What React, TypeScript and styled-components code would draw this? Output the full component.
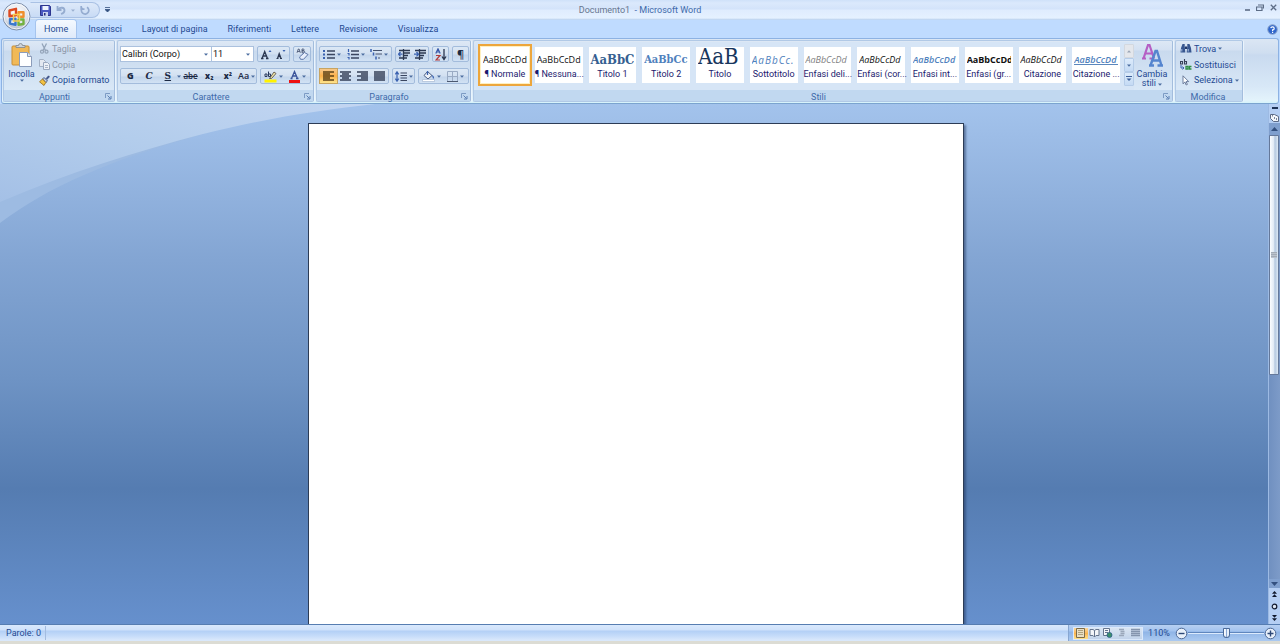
import React from 'react';
import styled, { createGlobalStyle, css } from 'styled-components';

const GlobalStyle = createGlobalStyle`
  *, *::before, *::after { box-sizing: border-box; }
  html, body, #root { height: 100%; }
  body {
    margin: 0;
    overflow: hidden;
    font-family: Roboto, 'Noto Sans', sans-serif;
    font-size: 9px;
    line-height: 12px;
    color: #1f4a92;
  }
  button, select, input { font: inherit; color: inherit; }
  button { border: 0; padding: 0; background: none; cursor: default; }
`;

const Window = styled.div`
  display: flex;
  flex-direction: column;
  height: 100vh;
  background: #bfdbff;
`;

/* ---------- title bar ---------- */

const TitleBar = styled.header`
  display: grid;
  grid-template-columns: 1fr auto 1fr;
  align-items: center;
  height: 20px;
  background: linear-gradient(#cfe1f9 0, #dbe9fc 3px, #d3e3fa 9px, #dfecfe 10px, #e5f1ff 18px, #b6cfee 20px);
`;

const QuickAccess = styled.div`
  display: flex;
  align-items: center;
  gap: 5px;
  margin-left: 30px;
`;

const QuickPill = styled.div`
  display: flex;
  align-items: center;
  gap: 4px;
  height: 16px;
  width: 70px;
  padding-left: 8px;
  border: 1px solid #a9c1e4;
  border-left-color: transparent;
  border-radius: 0 8px 8px 0;
  background: linear-gradient(#dde9f9, #c8dbf5);
`;

const DocTitle = styled.h1`
  margin: 0;
  font-size: 9px;
  font-weight: 400;
  line-height: 12px;
  white-space: pre;
  color: #3e6aaa;
`;

const DocName = styled.span`
  color: #67768f;
`;

const WindowButtons = styled.div`
  display: flex;
  justify-content: flex-end;
  align-items: center;
  gap: 3px;
  height: 14px;
  padding-right: 2px;
  align-self: start;
`;

const OfficeButton = styled.button`
  position: absolute;
  left: 2px;
  top: 2px;
  width: 30px;
  height: 30px;
  z-index: 2;
`;

const IconButton = styled.button<{ $w?: number }>`
  display: flex;
  align-items: center;
  justify-content: center;
  flex: none;
  width: ${(p) => (p.$w ? `${p.$w}px` : 'auto')};
  height: 14px;
`;

/* ---------- tabs ---------- */

const TabRow = styled.nav`
  display: flex;
  align-items: flex-end;
  gap: 4px;
  height: 18px;
  padding: 0 2px 0 36px;
  background: #bfdbff;
`;

const Tab = styled.button<{ $active?: boolean }>`
  height: 18px;
  padding: 0 8px;
  line-height: 16px;
  white-space: nowrap;
  border-radius: 3px 3px 0 0;
  ${(p) =>
    p.$active &&
    css`
      background: linear-gradient(#f4f9ff, #dfeafa);
      box-shadow: 0 0 0 1px #a5c4ee;
      clip-path: inset(-1px -1px 0 -1px);
    `}
`;

const HelpButton = styled(IconButton)`
  margin-left: auto;
  height: 18px;
`;

/* ---------- ribbon ---------- */

const Ribbon = styled.section`
  display: flex;
  gap: 2px;
  height: 66px;
  margin: 0 1px;
  padding: 1px;
  border: 1px solid #8db2e3;
  border-bottom-color: #7ba4cf;
  border-radius: 3px;
  background: linear-gradient(#dbe6f4 0, #cfdef0 14px, #c9daef 16px, #d8e8f7 48px, #e3f3fb 61px, #d5f3fb 64px);
`;

const Group = styled.section<{ $w?: number }>`
  display: flex;
  flex-direction: column;
  flex: none;
  width: ${(p) => (p.$w ? `${p.$w}px` : 'auto')};
  border: 1px solid #b1c9e6;
  border-right-color: #a3bddd;
  border-radius: 2px;
  box-shadow: 1px 0 0 #eaf4fd;
  background: linear-gradient(#dde8f5 0, #d4e1f2 9px, #c9daee 10px, #d9e8f7 50px);
`;

const GroupBody = styled.div`
  display: flex;
  flex: 1;
  min-height: 0;
  padding: 0 2px;
`;

const GroupTitle = styled.footer`
  display: flex;
  align-items: center;
  height: 11px;
  padding: 2px 2px 0 0;
  background: #c1d8f0;
  color: #3e6aaa;
`;

const GroupName = styled.h2`
  flex: 1;
  margin: 0;
  font-size: 9px;
  font-weight: 400;
  line-height: 12px;
  text-align: center;
`;

const Stack = styled.div`
  display: flex;
  flex-direction: column;
  justify-content: center;
  padding: 0 0 2px 2px;
`;

const SmallButton = styled.button<{ $dim?: boolean }>`
  display: flex;
  align-items: center;
  gap: 2px;
  height: 16px;
  white-space: nowrap;
  color: ${(p) => (p.$dim ? '#8e98a8' : '#1f4a92')};
`;

const BigButton = styled.button<{ $w: number }>`
  display: flex;
  flex-direction: column;
  align-items: center;
  width: ${(p) => p.$w}px;
  line-height: 9px;
  padding-top: 2px;
`;

const BigLabel = styled.span`
  margin-top: 3px;
`;

const Rows = styled.div`
  display: flex;
  flex-direction: column;
  gap: 6px;
  padding-top: 5px;
`;

const Row = styled.div`
  display: flex;
  align-items: center;
  gap: 3px;
  height: 16px;
`;

const ButtonSet = styled.div<{ $w: number }>`
  display: flex;
  align-items: center;
  justify-content: space-around;
  flex: none;
  width: ${(p) => p.$w}px;
  height: 16px;
  border: 1px solid #a3bcdc;
  border-radius: 2px;
  background: linear-gradient(#dce8f5 0, #d2e0f1 7px, #c3d5eb 8px, #d2e2f4 14px);
`;

const Tool = styled.button<{ $active?: boolean }>`
  display: flex;
  align-items: center;
  justify-content: center;
  flex: 1;
  gap: 2px;
  height: 14px;
  color: #1c2a44;
  ${(p) =>
    p.$active &&
    css`
      background: linear-gradient(#f7c88a, #fdb14a 50%, #fde58d);
      box-shadow: 0 0 0 1px #c7a462;
    `}
`;

const Glyph = styled.span<{ $serif?: boolean; $bold?: boolean; $italic?: boolean; $size?: number; $line?: string }>`
  font-family: ${(p) => (p.$serif ? "'DejaVu Serif', serif" : "'Open Sans', sans-serif")};
  font-weight: ${(p) => (p.$bold ? 800 : 600)};
  font-style: ${(p) => (p.$italic ? 'italic' : 'normal')};
  font-size: ${(p) => p.$size ?? 9}px;
  line-height: 12px;
  text-decoration: ${(p) => p.$line ?? 'none'};
`;

const Combos = styled.div`
  display: flex;
`;

const Combo = styled.label<{ $w: number }>`
  display: flex;
  align-items: center;
  width: ${(p) => p.$w}px;
  height: 16px;
  padding-right: 3px;
  border: 1px solid #abc1de;
  background: #fff;
  & + & { margin-left: -1px; }
`;

const ComboSelect = styled.select`
  flex: 1;
  min-width: 0;
  padding: 0 0 0 1px;
  border: 0;
  outline: 0;
  appearance: none;
  background: transparent;
  color: #111;
`;

/* ---------- style gallery ---------- */

const GalleryFrame = styled.div`
  display: flex;
  margin-top: 1px;
  height: 48px;
  padding: 2px 0 0 5px;
  background: #d6e5f6;
`;

const Gallery = styled.div`
  display: grid;
  grid-template-columns: repeat(12, 1fr);
  gap: 6px;
  width: 639px;
  padding-top: 3px;
`;

const StyleCard = styled.button<{ $active?: boolean }>`
  display: flex;
  flex-direction: column;
  min-width: 0;
  height: 36px;
  background: #fff;
  ${(p) =>
    p.$active &&
    css`
      box-shadow: 0 0 0 1px #fff0c0, 0 0 0 3px #eda63c;
    `}
`;

type SampleStyle = {
  size?: number;
  serif?: boolean;
  bold?: boolean;
  italic?: boolean;
  color?: string;
  spaced?: boolean;
  underline?: boolean;
};

const Sample = styled.span<{ $s: SampleStyle }>`
  align-self: center;
  width: 44px;
  height: 21px;
  line-height: ${(p) => ((p.$s.size ?? 9) > 15 ? 20 : 26)}px;
  overflow: hidden;
  text-align: left;
  white-space: nowrap;
  font-family: ${(p) => (p.$s.serif ? "'DejaVu Serif Condensed', 'DejaVu Serif', serif" : "'Open Sans', sans-serif")};
  font-size: ${(p) => p.$s.size ?? 9}px;
  font-weight: ${(p) => (p.$s.bold ? (p.$s.italic ? 600 : 700) : 400)};
  font-style: ${(p) => (p.$s.italic ? 'italic' : 'normal')};
  color: ${(p) => p.$s.color ?? '#111'};
  letter-spacing: ${(p) => (p.$s.spaced ? '1px' : 'normal')};
  border-bottom: ${(p) => (p.$s.underline ? '1px solid #5b87bd' : '0')};
`;

const StyleName = styled.span`
  width: 100%;
  text-align: center;
  white-space: nowrap;
  line-height: 18px;
  color: #1a1a6e;
`;

const GalleryScroll = styled.div`
  display: flex;
  flex-direction: column;
  width: 10px;
  margin-left: 4px;
`;

const ScrollStep = styled.button<{ $dim?: boolean }>`
  display: flex;
  align-items: center;
  justify-content: center;
  height: 14px;
  border: 1px solid ${(p) => (p.$dim ? '#d3d8df' : '#b5cce8')};
  border-radius: 1px;
  background: ${(p) => (p.$dim ? '#e4e7ec' : 'linear-gradient(#dcebfb, #c4daf4)')};
`;

/* ---------- workspace ---------- */

const Workspace = styled.main`
  position: relative;
  display: flex;
  flex: 1;
  min-height: 0;
  overflow: hidden;
  background: linear-gradient(#a3c3ec 0, #9dbde7 6%, #83a5d3 30%, #6e93c4 53%, #557cb1 74%, #6690cd 100%);
`;

const Swoosh = styled.svg`
  position: absolute;
  left: 0;
  top: 0;
`;

const Canvas = styled.div`
  position: relative;
  display: flex;
  flex: 1;
  justify-content: center;
  padding: 19px 0 0 3px;
`;

const Page = styled.article`
  width: 656px;
  max-width: 90%;
  border: 1px solid #2c3c56;
  border-bottom: 0;
  background: #fff;
  box-shadow: 2px 2px 2px rgba(30, 50, 90, 0.5);
`;

const ScrollColumn = styled.aside`
  position: relative;
  display: flex;
  flex-direction: column;
  align-items: center;
  width: 12px;
  border-left: 1px solid #9dbae3;
  background: #b4cef3;
`;

const SplitHandle = styled.div`
  width: 6px;
  height: 2px;
  margin: 3px 0 2px;
  background: #1e3356;
`;

const ScrollButton = styled.button<{ $h: number; $track?: boolean }>`
  display: flex;
  align-items: center;
  justify-content: center;
  width: 100%;
  height: ${(p) => p.$h}px;
  background: ${(p) => (p.$track ? '#7f9fce' : 'none')};
`;

const Track = styled.div`
  flex: 1;
  width: 100%;
  background: linear-gradient(90deg, #7090c0, #7d9bc8);
`;

const Thumb = styled.div`
  display: flex;
  align-items: center;
  justify-content: center;
  width: 10px;
  height: 54%;
  border: 1px solid #64789a;
  border-radius: 1px;
  background: linear-gradient(90deg, #fbfdff, #dfe9f4 50%, #b3c7df 60%, #dce8f4);
`;

const Grip = styled.div`
  width: 6px;
  height: 6px;
  background: repeating-linear-gradient(#a3abb6 0, #a3abb6 1px, #bcc3cd 1px, #bcc3cd 2px);
`;

/* ---------- status bar ---------- */

const StatusBar = styled.footer`
  display: flex;
  align-items: center;
  height: 20px;
  border-top: 1px solid #567db1;
  border-bottom: 3px solid #dcdcd4;
  background: linear-gradient(#d9e9fd 0, #cfe1fa 5px, #b3d0f6 6px, #c6dcf9 11px, #d9e8fb 15px);
`;

const WordCount = styled.button`
  height: 14px;
  width: 46px;
  padding-left: 6px;
  text-align: left;
  border-right: 1px solid #a3bcdf;
`;

const ViewPanel = styled.div`
  display: flex;
  align-items: center;
  flex: 1;
  justify-content: flex-end;
`;

const ViewTools = styled.div`
  display: flex;
  align-items: center;
  padding: 0 3px 0 4px;
  height: 16px;
  border-left: 1px solid #87a6d1;
  background: linear-gradient(#b7d0f2 0, #a3c3ee 6px, #8fb4e6 7px, #a9c8f0 15px);
`;

const ViewSet = styled.div`
  display: flex;
  width: 70px;
  height: 13px;
  border: 1px solid #dbe9fb;
`;

const ViewButton = styled.button<{ $active?: boolean }>`
  display: flex;
  align-items: center;
  justify-content: center;
  flex: 1;
  background: ${(p) => (p.$active ? 'linear-gradient(#fbd79b, #fbb54f 50%, #fde18c)' : 'linear-gradient(#dae5f2, #c2d3ea)')};
`;

const ZoomButton = styled.button`
  width: 32px;
  text-align: center;
`;

const RoundButton = styled.button`
  display: flex;
  width: 13px;
  height: 13px;
`;

const ZoomSlider = styled.input`
  width: 76px;
  height: 12px;
  margin: 0;
  appearance: none;
  background: linear-gradient(transparent 5px, #5f86bd 5px, #5f86bd 6px, #dcebfd 6px, #dcebfd 7px, transparent 7px);
  &::-webkit-slider-thumb {
    appearance: none;
    width: 7px;
    height: 10px;
    border: 1px solid #4b6a99;
    border-radius: 1px 1px 4px 4px;
    background: linear-gradient(90deg, #fff 0, #e6effa 2px, #8aa8d4 2px, #8aa8d4 3px, #e6effa 3px);
  }
`;

/* ---------- drawings ---------- */

const Svg = ({ w, h, children }: { w: number; h: number; children: React.ReactNode }) => (
  <svg width={w} height={h} viewBox={`0 0 ${w} ${h}`} fill="none" aria-hidden="true">
    {children}
  </svg>
);

const Caret = ({ color = '#4b6c9f' }: { color?: string }) => (
  <Svg w={4} h={3}>
    <path d="M0 .5h4L2 2.8z" fill={color} />
  </Svg>
);

const OfficeOrb = () => (
  <svg width="30" height="30" viewBox="0 0 30 30" aria-hidden="true">
    <defs>
      <radialGradient id="orb" cx="50%" cy="35%" r="65%">
        <stop offset="0" stopColor="#fff" />
        <stop offset=".65" stopColor="#dfe4ec" />
        <stop offset="1" stopColor="#a8b4c6" />
      </radialGradient>
    </defs>
    <circle cx="14.500" cy="14.500" r="13.500" fill="url(#orb)" stroke="#7f90ab" />
    <circle cx="14.500" cy="14.500" r="12.400" fill="none" stroke="#fff" strokeWidth=".8" />
    <g fill="none" strokeWidth="2.400" strokeLinejoin="round">
      <path d="M7.500 8.500 14 6.800v6.400l-6.500 1z" stroke="#dc4a20" />
      <path d="M16.500 10.200h5v4.600h-5z" stroke="#ef8f2c" />
      <path d="M8 17.200l5.500-.4v6L8 21.500z" stroke="#3a78cc" />
      <path d="M16.500 17.500h5v4.500l-5 .8z" stroke="#74b240" />
    </g>
    <path d="M11.500 12.500h6v6.500h-6z" fill="none" stroke="#f8cf50" strokeWidth="1.400" />
  </svg>
);

const SaveIcon = () => (
  <Svg w={11} h={11}>
    <path d="M.5.5h9l1 1v9H.5z" fill="#4a58c0" stroke="#2c358e" />
    <path d="M2.500 1h6v4h-6z" fill="#eef4ff" />
    <path d="M3 7h5v4H3z" fill="#c9d3ee" />
    <path d="M4 8h1.500v2.500H4z" fill="#222c78" />
  </Svg>
);

const UndoIcon = () => (
  <Svg w={10} h={10}>
    <path d="M1.500 1v4h4M2 4.500C4 2 8.500 2 8.500 5.500 8.500 7.500 7 8.500 5 9" stroke="#95acd0" strokeWidth="1.800" />
  </Svg>
);

const RedoIcon = () => (
  <Svg w={10} h={10}>
    <path d="M7 2.200a3.700 3.700 0 1 1-4.500.5M1.200 1v3.200h3.300" stroke="#95acd0" strokeWidth="1.700" />
  </Svg>
);

const PasteIcon = () => (
  <Svg w={21} h={24}>
    <rect x="1" y="3" width="17" height="19" rx="1" fill="#f1b957" stroke="#c98f37" />
    <path d="M5 4.500h9v-2h-2.500a2 2 0 0 0-4 0H5z" fill="#cdd3da" stroke="#7f8790" strokeWidth=".8" />
    <path d="M8.500 9.500h8l4 4v10h-12z" fill="#fff" stroke="#8b9cba" />
    <path d="M16.500 9.500v4h4" fill="#dfe8f4" stroke="#8b9cba" />
  </Svg>
);

const CutIcon = () => (
  <Svg w={11} h={11}>
    <path d="M3 .5l3.500 7M7.500.5 4 7.500" stroke="#93a3b8" strokeWidth="1.300" />
    <circle cx="3" cy="8.700" r="1.500" stroke="#93a3b8" strokeWidth="1.200" />
    <circle cx="7.500" cy="8.700" r="1.500" stroke="#93a3b8" strokeWidth="1.200" />
  </Svg>
);

const CopyIcon = () => (
  <Svg w={11} h={11}>
    <path d="M.5.5h4l2 2v5h-6z" fill="#e3e9f1" stroke="#a3b1c5" />
    <path d="M4.500 3.500h4l2 2v5h-6z" fill="#edf1f6" stroke="#9aa9bf" />
    <path d="M6 6.500h3M6 8.500h3" stroke="#a9b6c9" />
  </Svg>
);

const BrushIcon = () => (
  <Svg w={11} h={11}>
    <path d="M7 3.500 9.500.8l1 1L8 4.500z" fill="#3b4f86" stroke="#3b4f86" strokeWidth=".6" />
    <path d="M5 2.500 8.500 6 6.800 7.500 3.500 4z" fill="#c9d3e8" stroke="#3b4f7c" strokeWidth=".9" />
    <path d="M3.500 4 6.800 7.500 5 10.500.5 6.800z" fill="#f2c243" stroke="#8f671c" strokeWidth=".8" />
  </Svg>
);

const Launcher = () => (
  <Svg w={7} h={7}>
    <path d="M.5 5V.5H5" stroke="#7c9bc4" />
    <path d="M2.500 2.500l3 3M6 3v3H3" stroke="#5b7fb2" />
  </Svg>
);

const EraserIcon = () => (
  <Svg w={13} h={12}>
    <path d="M1 4.800 2.300 1h.8l1.200 3.800M1.500 3.500h2.300M6 1v3.800h1.500a1 1 0 0 0 0-2H6h1.200a.9.900 0 0 0 0-1.800z" stroke="#3c4a68" strokeWidth=".8" />
    <path d="M3.500 9 8.500 4.500l3.500 2-4.500 4.800H4.500z" fill="#e7eefb" stroke="#5f77a8" />
  </Svg>
);

const HighlightIcon = () => (
  <Svg w={13} h={13}>
    <path d="M5.500 8.500 10 2l2 1.500-4.500 5z" fill="#f0e4a8" stroke="#5a5448" strokeWidth=".9" />
    <path d="M.5 9.500h12v3H.5z" fill="#fff200" />
    <path d="M1 6.500V4h2v2.500zM4.500 1.500v5h2V4h-2" stroke="#2a3a5c" />
  </Svg>
);

const FontColorIcon = () => (
  <Svg w={11} h={13}>
    <path d="M1.500 8.500h2M7 8.500h2.500M2.500 8.500 5.500 1.500l3 7M3.500 6h4" stroke="#3a539a" strokeWidth="1.300" />
    <path d="M0 10h11v3H0z" fill="#ee1111" />
  </Svg>
);

const BulletIcon = ({ kind }: { kind: 'dots' | 'numbers' | 'levels' }) => (
  <Svg w={12} h={11}>
    {kind === 'dots' && <path d="M0 1h2v2H0zM0 4.500h2v2H0zM0 8h2v2H0z" fill="#3b62b0" />}
    {kind === 'numbers' && <path d="M1.500 0v3M.5 4.500h1.500v2M.5 8.500h1.500v2" stroke="#3b62b0" strokeWidth="1.200" />}
    {kind === 'levels' ? (
      <>
        <path d="M1 0v3M3.500 3.500v3M6 7.500v3" stroke="#3b62b0" strokeWidth="1.500" />
        <path d="M3 1.500h9M5.500 5H12M8 9h2" stroke="#46536e" strokeWidth="1.200" />
      </>
    ) : (
      <path d="M4 2h8M4 5.500h8M4 9h8" stroke="#3a4660" strokeWidth="1.300" />
    )}
  </Svg>
);

const IndentIcon = ({ out }: { out?: boolean }) => (
  <Svg w={12} h={11}>
    <path d="M1 1.500h11M6 4h6M6 6.500h4M1 9h8M5.500 0v11" stroke="#2b3750" strokeWidth="1.300" />
    <path d={out ? 'M4.500 5.200H1M2.500 3 .5 5.200l2 2.200' : 'M0 5.200h4M2.500 3l2 2.200-2 2.200'} stroke="#3b62b0" strokeWidth="1.300" />
  </Svg>
);

const SortIcon = () => (
  <Svg w={12} h={13}>
    <path d="M.8 5.500 3 .8l2.200 4.700M1.500 4h3" stroke="#3657a8" strokeWidth="1.200" />
    <path d="M1 7.500h4l-4 4.500h4" stroke="#b23a3a" strokeWidth="1.200" />
    <path d="M9 1v10M7 8.500l2 3 2-3" stroke="#2b3750" strokeWidth="1.300" />
  </Svg>
);

const AlignIcon = ({ side }: { side: 'left' | 'center' | 'right' | 'full' }) => {
  const d = {
    left: 'M0 1h11M0 3h7M0 5h11M0 7h7M0 9h11',
    center: 'M0 1h11M2 3h7M0 5h11M2 7h7M0 9h11',
    right: 'M0 1h11M4 3h7M0 5h11M4 7h7M0 9h11',
    full: 'M0 1h11M0 3h11M0 5h11M0 7h11M0 9h11',
  }[side];
  return (
    <Svg w={11} h={10}>
      <path d={d} stroke={side === 'left' ? '#5c4218' : '#333e55'} strokeWidth="1.300" />
    </Svg>
  );
};

const SpacingIcon = () => (
  <Svg w={12} h={11}>
    <path d="M2 1v9M.3 3.300 2 .8l1.700 2.500M.3 7.700 2 10.200l1.700-2.500" stroke="#3b62b0" strokeWidth="1.200" />
    <path d="M5.500 2H12M5.500 4.500H12M5.500 7H12M5.500 9.500H12" stroke="#3a4660" strokeWidth="1.100" />
  </Svg>
);

const BucketIcon = () => (
  <Svg w={13} h={12}>
    <path d="M5.500 1.500 10 5.500 6 9 2 5.500z" fill="#eef2f8" stroke="#4a5e84" />
    <path d="M5.500 1v4M10 5.500c1.500.5 1.500 2 1.500 3" stroke="#3b62b0" strokeWidth="1.300" />
    <path d="M.5 9.500h12v2H.5z" fill="#fff" stroke="#9db0cd" strokeWidth=".6" />
  </Svg>
);

const BordersIcon = () => (
  <Svg w={11} h={11}>
    <path d="M.5 10V.5h10V10M5.500.5V10M.5 5.500h10" stroke="#9aabc4" />
    <path d="M0 10.500h11" stroke="#4b5870" />
  </Svg>
);

const ChangeStylesIcon = () => (
  <Svg w={23} h={24}>
    <path d="M1 15.500h4M8.500 15.500h4M2.500 15.500 7 2h1.500l4.500 13.500M4.500 10.500h6.500" stroke="#b55fc4" strokeWidth="2.200" />
    <path d="M8 22.500h5M16.500 22.500H22M9.500 22.500 14.500 8H16l4.500 14.500M11.500 17.500h7.500" stroke="#5585cf" strokeWidth="2.400" />
  </Svg>
);

const BinocularsIcon = () => (
  <Svg w={12} h={11}>
    <path d="M2.500 1h2.200v2L5.300 9.500H.5L1 5zM7.300 1h2.200L11 5l.5 4.500H6.700L7.300 3z" fill="#37568f" />
    <path d="M5 3.500h2v2.500H5z" fill="#22396a" />
    <path d="M1.800 6v2.500M8.200 6v2.500" stroke="#a9bfe4" />
  </Svg>
);

const ReplaceIcon = () => (
  <Svg w={12} h={11}>
    <path d="M.5 2.500h2v2.500h-2zM4.500 0v5h2V2.500h-2" stroke="#37415a" strokeWidth="1.100" />
    <path d="M1 6v3h2M2.500 7.500 4 9 2.500 10.500" stroke="#3b62b0" />
    <path d="M6 7.500h2V10H6zM11.500 7.500H9.500V10h2" stroke="#2f8f46" strokeWidth="1.300" />
  </Svg>
);

const PointerIcon = () => (
  <Svg w={12} h={11}>
    <path d="M3 .8v8l1.900-1.800 1.300 3 1.200-.6-1.300-2.800h2.600z" fill="#fff" stroke="#5d6f92" strokeWidth=".9" />
  </Svg>
);

const HelpIcon = () => (
  <Svg w={11} h={11}>
    <circle cx="5.500" cy="5.500" r="4.800" fill="#2f66cc" stroke="#8fa6cc" />
    <path d="M3.800 4.200a1.700 1.500 0 1 1 1.800 1.700v1M5.600 7.800v1.200" stroke="#fff" strokeWidth="1.200" />
  </Svg>
);

const ViewIcon = ({ kind }: { kind: number }) => (
  <Svg w={11} h={10}>
    {kind === 0 && (
      <>
        <path d="M1.500.5h8v9h-8z" fill="#e9dfc4" stroke="#7c6c4a" />
        <path d="M3 2.500h5M3 4.500h5M3 6.500h5" stroke="#b0a37f" />
      </>
    )}
    {kind === 1 && <path d="M1 1.500h3l1.500 1L7 1.500h3v6H7L5.500 9 4 7.500H1zM5.500 2.500V9" fill="#f4f6f9" stroke="#65748d" />}
    {kind === 2 && (
      <>
        <path d="M1.500.5h6v7h-6zM3 2.500h3M3 4.500h3" fill="#f4f6f9" stroke="#65748d" />
        <circle cx="7.500" cy="7" r="2.500" fill="#3d8f6a" stroke="#2b5f8c" strokeWidth=".8" />
      </>
    )}
    {kind === 3 && <path d="M3 1.500h5M4.500 3.500h4M4.500 5.500h4M3 7.500h5" stroke="#9aa7ba" strokeWidth="1.500" />}
    {kind === 4 && <path d="M1 1.500h9M1 3.500h9M1 5.500h9M1 7.500h9" stroke="#8494ad" strokeWidth="1.600" />}
  </Svg>
);

const RoundIcon = ({ plus }: { plus?: boolean }) => (
  <Svg w={13} h={13}>
    <circle cx="6.500" cy="6.500" r="5.300" fill="#e8f0fa" stroke="#4c6794" />
    <path d={plus ? 'M3.500 6.500h6M6.500 3.500v6' : 'M3.500 6.500h6'} stroke="#2d4877" strokeWidth="1.400" />
  </Svg>
);

/* ---------- data ---------- */

const tabs = ['Home', 'Inserisci', 'Layout di pagina', 'Riferimenti', 'Lettere', 'Revisione', 'Visualizza'];

const BLUE = '#4f81bd';

const galleryStyles: { name: string; text: string; style: SampleStyle }[] = [
  { name: '¶ Normale', text: 'AaBbCcDd', style: {} },
  { name: '¶ Nessuna...', text: 'AaBbCcDd', style: {} },
  { name: 'Titolo 1', text: 'AaBbCc', style: { size: 13, serif: true, bold: true, color: '#365f91' } },
  { name: 'Titolo 2', text: 'AaBbCc', style: { size: 11, serif: true, bold: true, color: BLUE } },
  { name: 'Titolo', text: 'AaB', style: { size: 22, serif: true, color: '#17365d' } },
  { name: 'Sottotitolo', text: 'AaBbCc.', style: { size: 10, italic: true, color: BLUE, spaced: true } },
  { name: 'Enfasi deli...', text: 'AaBbCcDd', style: { italic: true, color: '#808080' } },
  { name: 'Enfasi (cor...', text: 'AaBbCcDd', style: { italic: true } },
  { name: 'Enfasi int...', text: 'AaBbCcDd', style: { italic: true, bold: true, color: BLUE } },
  { name: 'Enfasi (gr...', text: 'AaBbCcDd', style: { bold: true } },
  { name: 'Citazione', text: 'AaBbCcDd', style: { italic: true } },
  { name: 'Citazione ...', text: 'AaBbCcDd', style: { italic: true, bold: true, color: BLUE, underline: true } },
];

const GroupFooter = ({ name, launcher = true }: { name: string; launcher?: boolean }) => (
  <GroupTitle>
    <GroupName>{name}</GroupName>
    {launcher && (
      <IconButton aria-label={`Opzioni ${name}`}>
        <Launcher />
      </IconButton>
    )}
  </GroupTitle>
);

export default function App() {
  return (
    <Window>
      <GlobalStyle />
      <OfficeButton aria-label="Pulsante Office">
        <OfficeOrb />
      </OfficeButton>

      <TitleBar>
        <QuickAccess>
          <QuickPill>
            <IconButton $w={12} aria-label="Salva"><SaveIcon /></IconButton>
            <IconButton $w={12} aria-label="Annulla"><UndoIcon /></IconButton>
            <IconButton $w={4} aria-label="Elenco annulla"><Caret color="#9bb0d0" /></IconButton>
            <IconButton $w={12} aria-label="Ripeti"><RedoIcon /></IconButton>
          </QuickPill>
          <IconButton aria-label="Personalizza barra">
            <Svg w={5} h={6}>
              <path d="M0 .5h5M0 2.500h5L2.500 5z" stroke="#33507f" fill="#33507f" strokeWidth=".8" />
            </Svg>
          </IconButton>
        </QuickAccess>
        <DocTitle>
          <DocName>Documento1</DocName>
          {'  - Microsoft Word'}
        </DocTitle>
        <WindowButtons>
          <IconButton $w={10} aria-label="Riduci a icona">
            <Svg w={7} h={7}><path d="M1 6h5" stroke="#5d6d86" strokeWidth="1.600" /></Svg>
          </IconButton>
          <IconButton $w={10} aria-label="Ripristina">
            <Svg w={8} h={7}><path d="M2 1h5.500v3.500M.5 3H6v3.500H.5z" stroke="#5d6d86" strokeWidth="1.200" /></Svg>
          </IconButton>
          <IconButton $w={10} aria-label="Chiudi">
            <Svg w={7} h={7}><path d="M.8.800l5.400 5.400M6.200.800.8 6.200" stroke="#5d6d86" strokeWidth="1.300" /></Svg>
          </IconButton>
        </WindowButtons>
      </TitleBar>

      <TabRow>
        {tabs.map((t, i) => (
          <Tab key={t} $active={i === 0}>{t}</Tab>
        ))}
        <HelpButton $w={12} aria-label="Guida"><HelpIcon /></HelpButton>
      </TabRow>

      <Ribbon>
        <Group $w={112}>
          <GroupBody>
            <BigButton $w={31}>
              <PasteIcon />
              <BigLabel>Incolla</BigLabel>
              <Caret />
            </BigButton>
            <Stack>
              <SmallButton $dim><CutIcon />Taglia</SmallButton>
              <SmallButton $dim><CopyIcon />Copia</SmallButton>
              <SmallButton><BrushIcon />Copia formato</SmallButton>
            </Stack>
          </GroupBody>
          <GroupFooter name="Appunti" />
        </Group>

        <Group $w={197}>
          <GroupBody>
            <Rows>
              <Row>
                <Combos>
                  <Combo $w={92}>
                    <ComboSelect aria-label="Tipo di carattere"><option>Calibri (Corpo)</option></ComboSelect>
                    <Caret />
                  </Combo>
                  <Combo $w={43}>
                    <ComboSelect aria-label="Dimensione carattere"><option>11</option></ComboSelect>
                    <Caret />
                  </Combo>
                </Combos>
                <ButtonSet $w={33}>
                  <Tool aria-label="Aumenta carattere">
                    <Svg w={12} h={11}>
                      <path d="M1 9.500h2.500M6 9.500h2.500M2 9.500 4.700 2.500l2.800 7M3 7h3.500" stroke="#2b3750" strokeWidth="1.300" />
                      <path d="M8.500 3 10 1l1.500 2z" fill="#3b62b0" />
                    </Svg>
                  </Tool>
                  <Tool aria-label="Riduci carattere">
                    <Svg w={12} h={11}>
                      <path d="M1.500 9.500h2M5 9.500h2M2.500 9.500 4.200 4.500l1.900 5M3 7.700h2.500" stroke="#2b3750" strokeWidth="1.200" />
                      <path d="M7.500 1 9 3l1.500-2z" fill="#3b62b0" />
                    </Svg>
                  </Tool>
                </ButtonSet>
                <ButtonSet $w={18}><Tool aria-label="Cancella formattazione"><EraserIcon /></Tool></ButtonSet>
              </Row>
              <Row>
                <ButtonSet $w={137}>
                  <Tool><Glyph $bold>G</Glyph></Tool>
                  <Tool><Glyph $serif $italic>C</Glyph></Tool>
                  <Tool><Glyph $serif $line="underline">S</Glyph></Tool>
                  <Caret />
                  <Tool><Glyph $line="line-through" $size={8}>abe</Glyph></Tool>
                  <Tool><Glyph $bold $size={8}>x₂</Glyph></Tool>
                  <Tool><Glyph $bold $size={8}>x²</Glyph></Tool>
                  <Tool><Glyph>Aa</Glyph><Caret /></Tool>
                </ButtonSet>
                <ButtonSet $w={51}>
                  <Tool aria-label="Evidenziatore"><HighlightIcon /><Caret /></Tool>
                  <Tool aria-label="Colore carattere"><FontColorIcon /><Caret /></Tool>
                </ButtonSet>
              </Row>
            </Rows>
          </GroupBody>
          <GroupFooter name="Carattere" />
        </Group>

        <Group $w={155}>
          <GroupBody>
            <Rows>
              <Row>
                <ButtonSet $w={73}>
                  <Tool aria-label="Elenco puntato"><BulletIcon kind="dots" /><Caret /></Tool>
                  <Tool aria-label="Elenco numerato"><BulletIcon kind="numbers" /><Caret /></Tool>
                  <Tool aria-label="Elenco a livelli"><BulletIcon kind="levels" /><Caret /></Tool>
                </ButtonSet>
                <ButtonSet $w={34}>
                  <Tool aria-label="Riduci rientro"><IndentIcon out /></Tool>
                  <Tool aria-label="Aumenta rientro"><IndentIcon /></Tool>
                </ButtonSet>
                <ButtonSet $w={17}><Tool aria-label="Ordina"><SortIcon /></Tool></ButtonSet>
                <ButtonSet $w={17}><Tool><Glyph $size={11}>¶</Glyph></Tool></ButtonSet>
              </Row>
              <Row>
                <ButtonSet $w={70}>
                  <Tool $active aria-label="Allinea a sinistra"><AlignIcon side="left" /></Tool>
                  <Tool aria-label="Centra"><AlignIcon side="center" /></Tool>
                  <Tool aria-label="Allinea a destra"><AlignIcon side="right" /></Tool>
                  <Tool aria-label="Giustifica"><AlignIcon side="full" /></Tool>
                </ButtonSet>
                <ButtonSet $w={23}><Tool aria-label="Interlinea"><SpacingIcon /><Caret /></Tool></ButtonSet>
                <ButtonSet $w={51}>
                  <Tool aria-label="Sfondo"><BucketIcon /><Caret /></Tool>
                  <Tool aria-label="Bordi"><BordersIcon /><Caret /></Tool>
                </ButtonSet>
              </Row>
            </Rows>
          </GroupBody>
          <GroupFooter name="Paragrafo" />
        </Group>

        <Group $w={700}>
          <GroupBody>
            <GalleryFrame>
              <Gallery>
                {galleryStyles.map((g, i) => (
                  <StyleCard key={g.name} $active={i === 0}>
                    <Sample $s={g.style}>{g.text}</Sample>
                    <StyleName>{g.name}</StyleName>
                  </StyleCard>
                ))}
              </Gallery>
              <GalleryScroll>
                <ScrollStep $dim aria-label="Riga precedente">
                  <Svg w={4} h={3}><path d="M0 2.500h4L2 .3z" fill="#9aa5b5" /></Svg>
                </ScrollStep>
                <ScrollStep aria-label="Riga successiva"><Caret /></ScrollStep>
                <ScrollStep aria-label="Altri stili">
                  <Svg w={6} h={6}><path d="M0 .5h6" stroke="#3e609a" /><path d="M.5 2.500h5L3 5z" fill="#3e609a" /></Svg>
                </ScrollStep>
              </GalleryScroll>
            </GalleryFrame>
            <BigButton $w={37}>
              <ChangeStylesIcon />
              <BigLabel>
                Cambia
                <br />
                stili <Caret />
              </BigLabel>
            </BigButton>
          </GroupBody>
          <GroupFooter name="Stili" />
        </Group>

        <Group $w={68}>
          <GroupBody>
            <Stack>
              <SmallButton><BinocularsIcon />Trova <Caret /></SmallButton>
              <SmallButton><ReplaceIcon />Sostituisci</SmallButton>
              <SmallButton><PointerIcon />Seleziona <Caret /></SmallButton>
            </Stack>
          </GroupBody>
          <GroupFooter name="Modifica" launcher={false} />
        </Group>
      </Ribbon>

      <Workspace>
        <Swoosh width="390" height="124" viewBox="0 0 390 124" aria-hidden="true">
          <defs>
            <linearGradient id="sky" x1="0" y1="1" x2="1" y2="0">
              <stop offset="0" stopColor="#a4c0e6" />
              <stop offset=".5" stopColor="#b3cdec" />
              <stop offset="1" stopColor="#c3d6f2" />
            </linearGradient>
          </defs>
          <path d="M0 119C50 82 105 58 203 30L0 60z" fill="#9dbbe2" />
          <path d="M0 98C70 68 135 48 203 30 262 15 320 6 375 0H0z" fill="url(#sky)" />
        </Swoosh>
        <Canvas>
          <Page aria-label="Documento1" />
        </Canvas>
        <ScrollColumn>
          <SplitHandle />
          <ScrollButton $h={12} aria-label="Righello">
            <Svg w={9} h={9}>
              <path d="M.5 1.500h4l4 2v5h-5l-3-3z" fill="#f4f7fb" stroke="#5b6a86" />
              <path d="M2.500 1.500v2M4.500 4v2M6.500 5v2" stroke="#5b6a86" strokeWidth=".8" />
            </Svg>
          </ScrollButton>
          <ScrollButton $h={12} $track aria-label="Scorri su">
            <Svg w={7} h={4}><path d="M0 4h7L3.500 0z" fill="#33507f" /></Svg>
          </ScrollButton>
          <Track>
            <Thumb><Grip /></Thumb>
          </Track>
          <ScrollButton $h={9} $track aria-label="Scorri giù">
            <Svg w={7} h={4}><path d="M0 0h7L3.500 4z" fill="#33507f" /></Svg>
          </ScrollButton>
          <ScrollButton $h={12} aria-label="Pagina precedente">
            <Svg w={5} h={6}><path d="M0 2.800h5L2.500 0zM0 6h5L2.500 3.200z" fill="#10182c" /></Svg>
          </ScrollButton>
          <ScrollButton $h={12} aria-label="Seleziona oggetto">
            <Svg w={7} h={7}><circle cx="3.500" cy="3.500" r="2.300" stroke="#10182c" strokeWidth="1.200" fill="#dfe8f5" /></Svg>
          </ScrollButton>
          <ScrollButton $h={12} aria-label="Pagina successiva">
            <Svg w={5} h={6}><path d="M0 0h5L2.500 2.800zM0 3.200h5L2.500 6z" fill="#10182c" /></Svg>
          </ScrollButton>
        </ScrollColumn>
      </Workspace>

      <StatusBar>
        <WordCount>Parole: 0</WordCount>
        <ViewPanel>
          <ViewTools>
            <ViewSet>
              {['Layout di stampa', 'Lettura a schermo intero', 'Layout Web', 'Struttura', 'Bozza'].map((v, i) => (
                <ViewButton key={v} $active={i === 0} aria-label={v}><ViewIcon kind={i} /></ViewButton>
              ))}
            </ViewSet>
            <ZoomButton>110%</ZoomButton>
            <RoundButton aria-label="Zoom indietro"><RoundIcon /></RoundButton>
            <ZoomSlider type="range" min={10} max={210} defaultValue={110} aria-label="Zoom" />
            <RoundButton aria-label="Zoom avanti"><RoundIcon plus /></RoundButton>
          </ViewTools>
        </ViewPanel>
      </StatusBar>
    </Window>
  );
}
